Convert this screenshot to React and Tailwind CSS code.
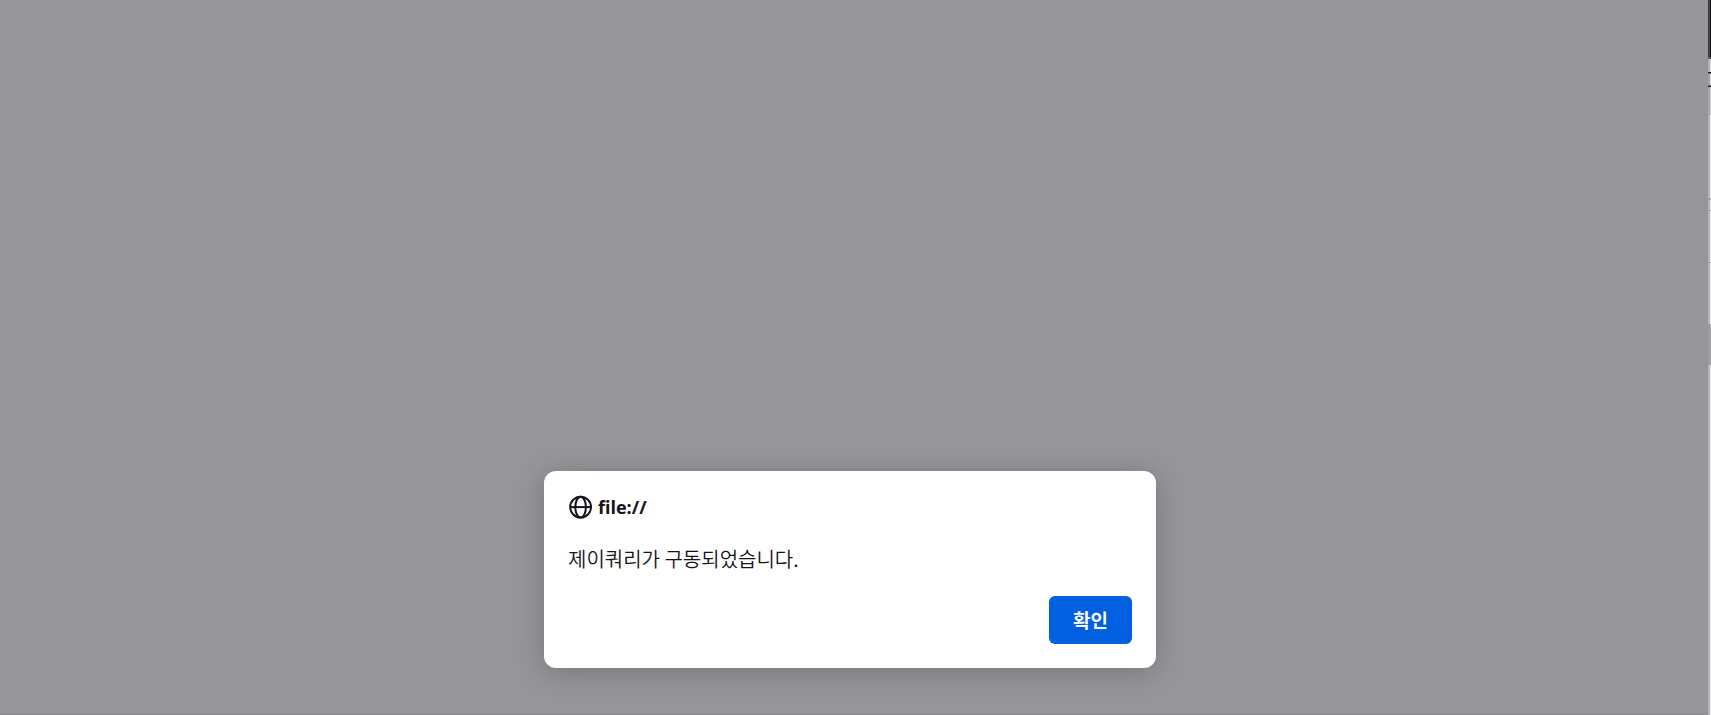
import React from "react";

const edgeSegments = [
  { height: 57, left: "bg-[#3f3f3f]", right: "bg-[#1b1b1b]" },
  { height: 2, left: "bg-[#5c5c5c]", right: "bg-[#4c4c4c]" },
  { height: 13, left: "bg-[#b4b4b4]", right: "bg-[#dedede]" },
  { height: 1, left: "bg-[#1a1a1a]", right: "bg-[#111111]" },
  { height: 1, left: "bg-[#6f6f6f]", right: "bg-[#7a7a7a]" },
  { height: 11, left: "bg-[#a6a6a6]", right: "bg-[#d2d2d2]" },
  { height: 1, left: "bg-[#6f6f6f]", right: "bg-[#7a7a7a]" },
  { height: 1, left: "bg-[#1a1a1a]", right: "bg-[#111111]" },
  { height: 28, left: "bg-[#a9a9a9]", right: "bg-[#c9c9c9]" },
  { height: 83, left: "bg-[#b5b5b5]", right: "bg-[#eeeeec]" },
  { height: 2, left: "bg-[#a3a3a3]", right: "bg-[#b0b0b0]" },
  { height: 10, left: "bg-[#b5b5b5]", right: "bg-[#e6e6e4]" },
  { height: 1, left: "bg-[#a3a3a3]", right: "bg-[#b0b0b0]" },
  { height: 51, left: "bg-[#b5b5b5]", right: "bg-[#eeeeec]" },
  { height: 1, left: "bg-[#a3a3a3]", right: "bg-[#b0b0b0]" },
  { height: 61, left: "bg-[#b5b5b5]", right: "bg-[#eeeeec]" },
  { height: 41, left: "bg-[#9f9f9f]", right: "bg-[#a6a6a6]" },
];

function GlobeIcon() {
  return (
    <svg
      className="size-6 shrink-0"
      viewBox="0 0 24 24"
      fill="none"
      stroke="currentColor"
      strokeWidth="2"
      aria-hidden="true"
    >
      <circle cx="12.6" cy="12.1" r="10.4" />
      <ellipse cx="12.6" cy="12.1" rx="5.3" ry="10.4" />
      <path d="M2.2 12.1h20.8" />
    </svg>
  );
}

function WindowEdge() {
  return (
    <div className="flex w-[3px] shrink-0 flex-col" aria-hidden="true">
      {edgeSegments.map((s, i) => (
        <div key={i} className="flex shrink-0" style={{ height: s.height }}>
          <div className={`w-[2px] ${s.left}`} />
          <div className={`w-px ${s.right}`} />
        </div>
      ))}
      <div className="flex grow">
        <div className="w-[2px] bg-[#b5b5b5]" />
        <div className="w-px bg-[#eeeeec]" />
      </div>
    </div>
  );
}

export default function App() {
  return (
    <div className="flex min-h-screen bg-[#969599] text-[#15141a]">
      <main className="flex grow items-end justify-center overflow-hidden border-b border-[#8c8b90] pr-2 pb-[46px]">
        <section
          role="alertdialog"
          aria-labelledby="dialog-title"
          aria-describedby="dialog-message"
          className="flex w-full max-w-[612px] flex-col rounded-xl bg-white p-6 shadow-[0_4px_28px_rgba(0,0,0,0.22)]"
        >
          <header className="flex h-6 items-center gap-1.5">
            <GlobeIcon />
            <h1
              id="dialog-title"
              className="font-['Open_Sans','Noto_Sans',sans-serif] text-[18px] leading-6 font-bold"
            >
              file://
            </h1>
          </header>
          <p
            id="dialog-message"
            className="mt-6 font-['Noto_Sans_CJK_KR',sans-serif] text-[20px] leading-8 font-[350]"
          >
            제이쿼리가 구동되었습니다.
          </p>
          <button
            type="button"
            className="mt-[21px] h-12 self-end rounded-md bg-[#0060df] px-6 font-['Noto_Sans_CJK_KR',sans-serif] text-[19px] leading-6 font-bold text-[#fbfbfe]"
          >
            확인
          </button>
        </section>
      </main>
      <WindowEdge />
    </div>
  );
}
